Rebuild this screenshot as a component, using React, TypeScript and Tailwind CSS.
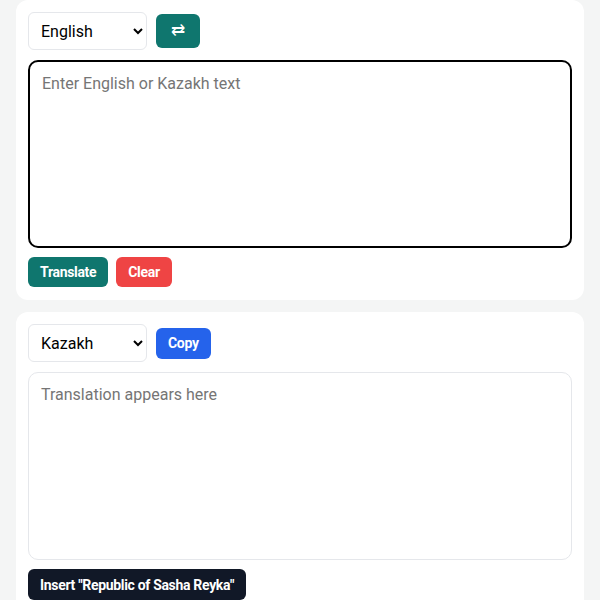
import { useState } from "react";

const font = { fontFamily: "Roboto, 'Noto Sans', sans-serif" };

export default function App() {
  const [source, setSource] = useState("");
  const [from, setFrom] = useState("English");
  const [to, setTo] = useState("Kazakh");

  return (
    <div className="min-h-[600px] bg-[#f4f5f5] px-4" style={font}>
      <section className="rounded-xl bg-white p-3 pb-[13px]">
        <div className="flex items-center gap-[9px]">
          <select
            value={from}
            onChange={(event) => setFrom(event.target.value)}
            className="h-[38px] w-[119px] rounded-md border border-[#e5e7eb] bg-white pl-2 pr-2 text-base text-black outline-none"
          >
            <option>English</option>
            <option>Kazakh</option>
          </select>
          <button
            type="button"
            onClick={() => {
              setFrom(to);
              setTo(from);
            }}
            className="flex h-[34px] w-11 items-center justify-center rounded-md bg-[#0f766e] text-[17px] text-white"
          >
            ⇄
          </button>
        </div>
        <textarea
          value={source}
          onChange={(event) => setSource(event.target.value)}
          placeholder="Enter English or Kazakh text"
          className="mt-2.5 block h-[188px] w-full resize-none rounded-[10px] border-2 border-black px-3 py-2.5 text-base text-black outline-none placeholder:text-[#757575]"
        />
        <div className="mt-[9px] flex gap-2">
          <button
            type="button"
            className="h-[30px] rounded-md bg-[#0f766e] px-3 text-sm font-bold tracking-[-0.32px] text-white"
          >
            Translate
          </button>
          <button
            type="button"
            onClick={() => setSource("")}
            className="h-[30px] rounded-md bg-[#ef4444] px-3 text-sm font-bold tracking-[-0.32px] text-white"
          >
            Clear
          </button>
        </div>
      </section>

      <section className="mt-3 rounded-xl bg-white p-3">
        <div className="flex items-center gap-[9px]">
          <select
            value={to}
            onChange={(event) => setTo(event.target.value)}
            className="h-[38px] w-[119px] rounded-md border border-[#e5e7eb] bg-white pl-2 pr-2 text-base text-black outline-none"
          >
            <option>Kazakh</option>
            <option>English</option>
          </select>
          <button
            type="button"
            className="h-[31px] rounded-md bg-[#2563eb] px-3 text-sm font-bold tracking-[-0.32px] text-white"
          >
            Copy
          </button>
        </div>
        <textarea
          readOnly
          placeholder="Translation appears here"
          className="mt-2.5 block h-[188px] w-full resize-none rounded-[10px] border border-[#e5e7eb] px-3 py-2.5 text-base text-black outline-none placeholder:text-[#757575]"
        />
        <button
          type="button"
          onClick={() => setSource((value) => value + "Republic of Sasha Reyka")}
          className="mt-[9px] h-[31px] rounded-md bg-[#111827] px-3 text-sm font-bold tracking-[-0.32px] text-white"
        >
          Insert "Republic of Sasha Reyka"
        </button>
      </section>
    </div>
  );
}
